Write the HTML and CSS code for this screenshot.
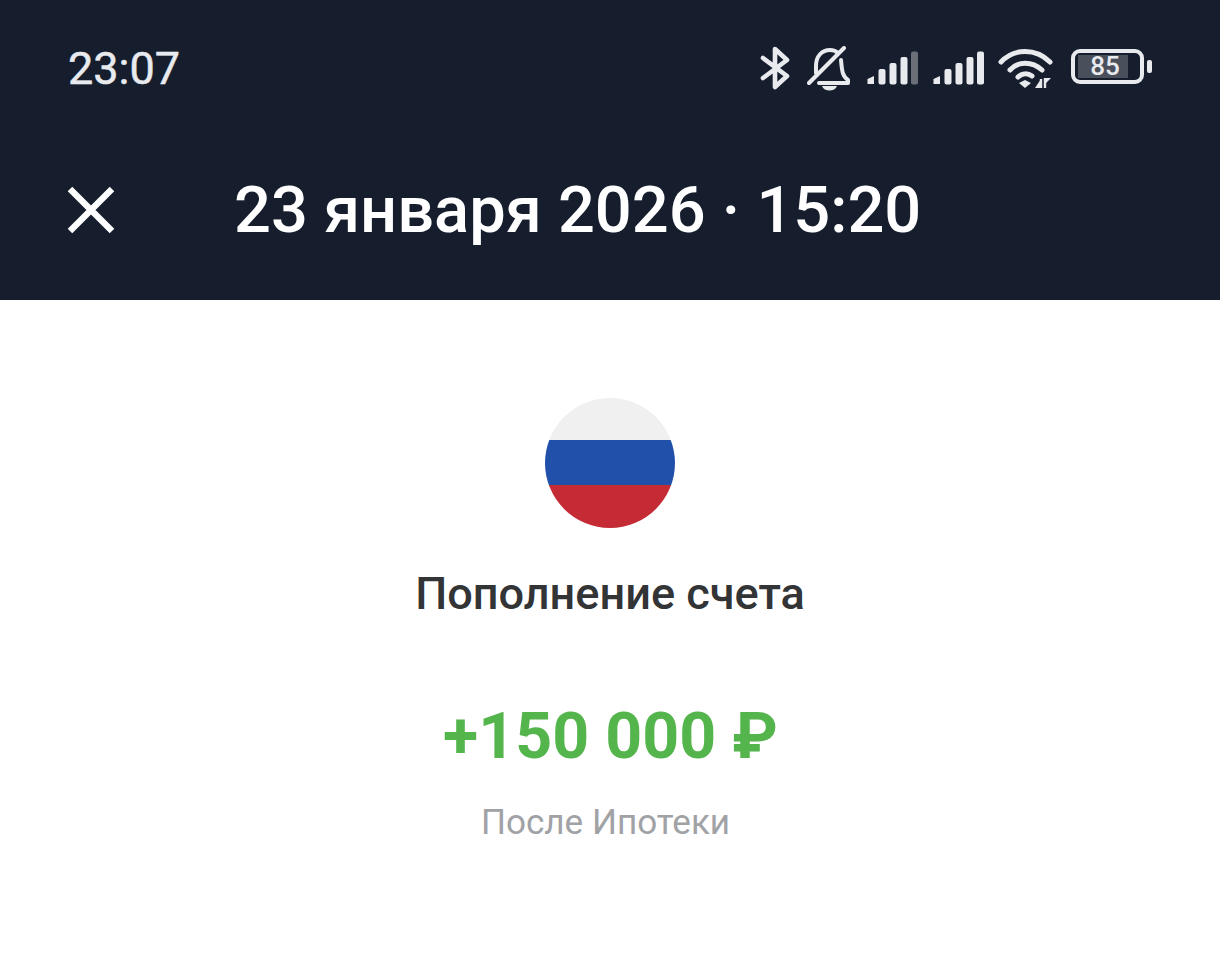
FILE: index.html
```html
<!DOCTYPE html>
<html lang="ru">
<head>
<meta charset="utf-8">
<title>Пополнение счета</title>
<link rel="stylesheet" href="styles.css">
</head>
<body>
<header class="top">
  <div class="status">
    <span class="time">23:07</span>
    <div class="icons">
      <svg class="i-bt" width="30" height="46" viewBox="0 0 30 46"><path d="M3 13 L27 31 L15 42 V4 L27 15 L3 33" fill="none" stroke="#e8eaee" stroke-width="4.6" stroke-linecap="round" stroke-linejoin="round"/></svg>
      <svg class="i-bell" width="44" height="46" viewBox="0 0 44 46"><path d="M9 27 V20 C9 10 15 4 23 4 C26 4 29 5 31 7 M34 14 C35 24 35 30 41 34 L41 37 H12" fill="none" stroke="#e8eaee" stroke-width="4" stroke-linecap="round" stroke-linejoin="round"/><path d="M2 37 L37 2" stroke="#e8eaee" stroke-width="4" stroke-linecap="round"/><path d="M15 40 H30 C28 46 17 46 15 40 Z" fill="#e8eaee"/></svg>
      <svg class="i-sig" width="53" height="36" viewBox="0 0 53 36"><path d="M1.5 29 L8 26 V34 H1.5 Z" fill="#e8eaee"/><rect x="12.5" y="19" width="7" height="15.5" rx="2" fill="#e8eaee"/><rect x="23.5" y="13" width="7" height="21.5" rx="2" fill="#e8eaee"/><rect x="34.5" y="7" width="7" height="27.5" rx="2" fill="#e8eaee"/><rect x="45" y="1.5" width="7" height="33" rx="2" fill="#6a6f78"/></svg>
      <svg class="i-sig" width="53" height="36" viewBox="0 0 53 36"><path d="M1.5 29 L8 26 V34 H1.5 Z" fill="#e8eaee"/><rect x="12.5" y="19" width="7" height="15.5" rx="2" fill="#e8eaee"/><rect x="23.5" y="13" width="7" height="21.5" rx="2" fill="#e8eaee"/><rect x="34.5" y="7" width="7" height="27.5" rx="2" fill="#e8eaee"/><rect x="45" y="1.5" width="7" height="33" rx="2" fill="#e8eaee"/></svg>
      <svg class="i-wifi" width="56" height="42" viewBox="0 0 56 42"><g fill="none" stroke="#e8eaee" stroke-width="5" stroke-linecap="round"><path d="M3 15 C16 1 38 1 52 15"/><path d="M12 23 C20 14 34 14 44 23"/><path d="M20 30 C24 26 30 26 34 29"/></g><path d="M21 36 L27 33 L33 36 L27 41 Z" fill="#e8eaee"/><path d="M43 32 V41 H37 Z M47 31 H53 L47 37 Z" fill="#e8eaee"/><path d="M43 32 V41 M47 31 V41" stroke="#e8eaee" stroke-width="2.4"/></svg>
      <div class="battery">
        <div class="cell"><div class="level">85</div></div>
        <div class="nub"></div>
      </div>
    </div>
  </div>
  <div class="bar">
    <svg class="close" width="48" height="48" viewBox="0 0 48 48"><path d="M3 3 L45 45 M45 3 L3 45" stroke="#fff" stroke-width="6.4"/></svg>
    <h1 class="title">23 января 2026 · 15:20</h1>
  </div>
</header>
<main class="body">
  <svg class="flag" width="130" height="130" viewBox="0 0 130 130">
    <defs><clipPath id="c"><circle cx="65" cy="65" r="65"/></clipPath></defs>
    <g clip-path="url(#c)">
      <rect width="130" height="43" fill="#f0f0f0"/>
      <rect y="42" width="130" height="46" fill="#2150ab"/>
      <rect y="87" width="130" height="43" fill="#c42b34"/>
    </g>
  </svg>
  <div class="name">Пополнение счета</div>
  <div class="amount">+150 000 ₽</div>
  <div class="note">После Ипотеки</div>
</main>
</body>
</html>
```

FILE: styles.css
```css
html, body {
  margin: 0;
  padding: 0;
  background: #fff;
  font-family: Roboto, "Liberation Sans", sans-serif;
}
.top {
  height: 300px;
  background: #161e2d;
  display: flex;
  flex-direction: column;
}
.status {
  height: 138px;
  box-sizing: border-box;
  padding: 0 68px 0 68px;
  display: flex;
  justify-content: space-between;
  align-items: flex-start;
}
.time {
  margin-top: 42px;
  font-size: 45px;
  line-height: 53px;
  color: #e8eaee;
  -webkit-text-stroke: 0.5px #e8eaee;
}
.icons {
  margin-top: 45px;
  display: flex;
  align-items: flex-start;
}
.i-bt { margin-left: 3px; margin-right: 17px; }
.i-bell { margin-top: 1px; margin-right: 15px; }
.i-sig { margin-top: 5px; margin-right: 13px; }
.i-wifi { margin-top: 2px; margin-right: 17px; }
.battery {
  margin-top: 4px;
  display: flex;
  align-items: center;
}
.cell {
  width: 73px;
  height: 35px;
  box-sizing: border-box;
  border: 4px solid #e8eaee;
  border-radius: 9px;
  padding: 2px 3px;
}
.level {
  width: 50px;
  height: 23px;
  background: #4a4f5c;
  color: #e8eaee;
  font-size: 26px;
  font-weight: 500;
  line-height: 23px;
  text-align: center;
  padding-left: 4px;
  box-sizing: border-box;
}
.nub {
  width: 5px;
  height: 13px;
  margin-left: 3px;
  border-radius: 2px;
  background: #e8eaee;
}
.bar {
  display: flex;
  align-items: center;
  padding-left: 67px;
  height: 144px;
}
.close { flex: none; }
.title {
  margin: -1px 0 0 119px;
  font-size: 65px;
  line-height: 70px;
  font-weight: 500;
  color: #fff;
  white-space: nowrap;
}
.body {
  display: flex;
  flex-direction: column;
  align-items: center;
  padding-top: 98px;
}
.flag { display: block; }
.name {
  margin-top: 41px;
  font-size: 45.1px;
  line-height: 50px;
  font-weight: 500;
  color: #333436;
}
.amount {
  margin-top: 75px;
  margin-left: 1px;
  font-size: 64.5px;
  line-height: 84px;
  font-weight: 700;
  color: #55b54d;
}
.note {
  margin-top: 23px;
  margin-right: 9px;
  font-size: 35.1px;
  line-height: 42px;
  color: #a0a2a6;
}
```
